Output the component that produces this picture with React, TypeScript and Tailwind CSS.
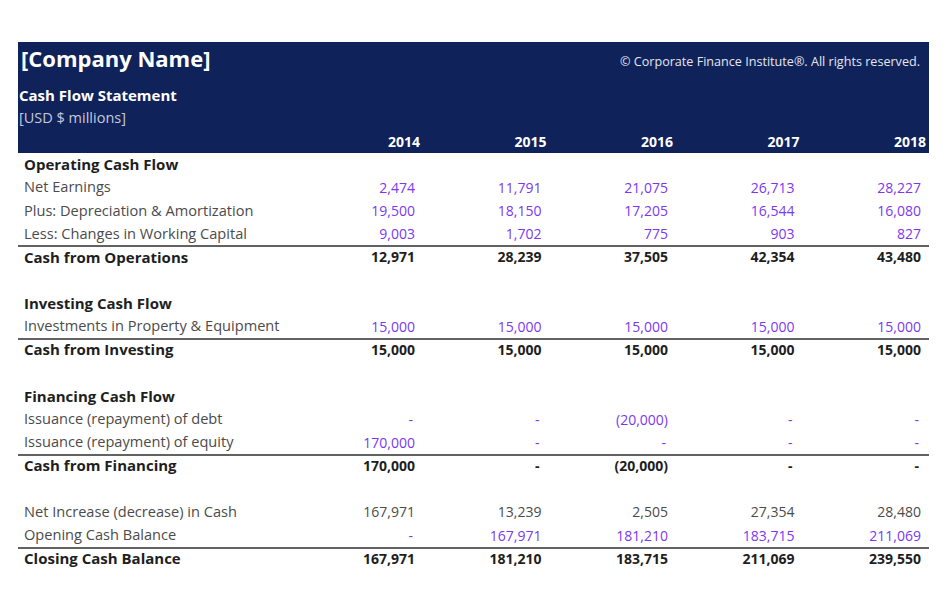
import React from 'react';

type Kind = 'head' | 'input' | 'calc' | 'total' | 'blank';

interface Row {
    label?: string;
    vals?: string[];
    kind: Kind;
    line?: boolean;
}

const years = ['2014', '2015', '2016', '2017', '2018'];

const rows: Row[] = [
    { label: 'Operating Cash Flow', kind: 'head' },
    { label: 'Net Earnings', kind: 'input', vals: ['2,474', '11,791', '21,075', '26,713', '28,227'] },
    { label: 'Plus: Depreciation & Amortization', kind: 'input', vals: ['19,500', '18,150', '17,205', '16,544', '16,080'] },
    { label: 'Less: Changes in Working Capital', kind: 'input', vals: ['9,003', '1,702', '775', '903', '827'] },
    { label: 'Cash from Operations', kind: 'total', line: true, vals: ['12,971', '28,239', '37,505', '42,354', '43,480'] },
    { kind: 'blank' },
    { label: 'Investing Cash Flow', kind: 'head' },
    { label: 'Investments in Property & Equipment', kind: 'input', vals: ['15,000', '15,000', '15,000', '15,000', '15,000'] },
    { label: 'Cash from Investing', kind: 'total', line: true, vals: ['15,000', '15,000', '15,000', '15,000', '15,000'] },
    { kind: 'blank' },
    { label: 'Financing Cash Flow', kind: 'head' },
    { label: 'Issuance (repayment) of debt', kind: 'input', vals: ['-', '-', '(20,000)', '-', '-'] },
    { label: 'Issuance (repayment) of equity', kind: 'input', vals: ['170,000', '-', '-', '-', '-'] },
    { label: 'Cash from Financing', kind: 'total', line: true, vals: ['170,000', '-', '(20,000)', '-', '-'] },
    { kind: 'blank' },
    { label: 'Net Increase (decrease) in Cash', kind: 'calc', vals: ['167,971', '13,239', '2,505', '27,354', '28,480'] },
    { label: 'Opening Cash Balance', kind: 'input', vals: ['-', '167,971', '181,210', '183,715', '211,069'] },
    { label: 'Closing Cash Balance', kind: 'total', line: true, vals: ['167,971', '181,210', '183,715', '211,069', '239,550'] },
];

const grid = 'grid grid-cols-[278.5px_repeat(5,126.5px)] items-center';

const TableRow: React.FC<{ row: Row }> = ({ row }) => {
    const bold = row.kind === 'head' || row.kind === 'total';
    const labelStyle = bold ? 'text-[#1e1e1e] font-bold text-[15px]' : 'text-[#4b4b4b] text-[14.6px]';
    const valColor =
        row.kind === 'input' ? 'text-[#7b38f2]' : row.kind === 'calc' ? 'text-[#4b4b4b]' : 'text-[#1e1e1e] font-bold';

    return (
        <div className={`${grid} h-[23.2px] ${row.line ? 'shadow-[inset_0_2px_0_#626262]' : ''}`}>
            <div className={`pl-[6px] whitespace-nowrap ${labelStyle}`}>{row.label}</div>
            {row.vals?.map((v, i) => (
                <div key={i} className={`text-right text-[14px] ${valColor} ${v === '-' ? 'pr-[10px]' : 'pr-[8px]'}`}>
                    {v}
                </div>
            ))}
        </div>
    );
};

export default function App() {
    return (
        <div className="min-h-[602px] w-[949px] bg-white pt-[42px] pl-[18px] font-['Open_Sans',sans-serif]">
            <div className="w-[911px]">
                {/* Header block */}
                <div className="bg-[#10225a] text-white">
                    <div className="flex h-[32px] items-center justify-between pl-[3px] pr-[9px]">
                        <div className="text-[22px] font-bold leading-none">[Company Name]</div>
                        <div className="pt-[9px] text-[12.6px] text-[#e4e6f0]">© Corporate Finance Institute®. All rights reserved.</div>
                    </div>
                    <div className="h-[9.5px]" />
                    <div className="flex h-[23px] items-center pl-[1px] text-[15px] font-bold">Cash Flow Statement</div>
                    <div className="flex h-[23px] items-center pl-[1px] text-[14.5px] text-[#c6c9de]">[USD $ millions]</div>
                    <div className={`${grid} h-[23px]`}>
                        <div />
                        {years.map(y => (
                            <div key={y} className="pr-[3px] text-right text-[14px] font-bold">
                                {y}
                            </div>
                        ))}
                    </div>
                </div>

                {/* Body */}
                {rows.map((r, i) => (
                    <TableRow key={i} row={r} />
                ))}
            </div>
        </div>
    );
}
